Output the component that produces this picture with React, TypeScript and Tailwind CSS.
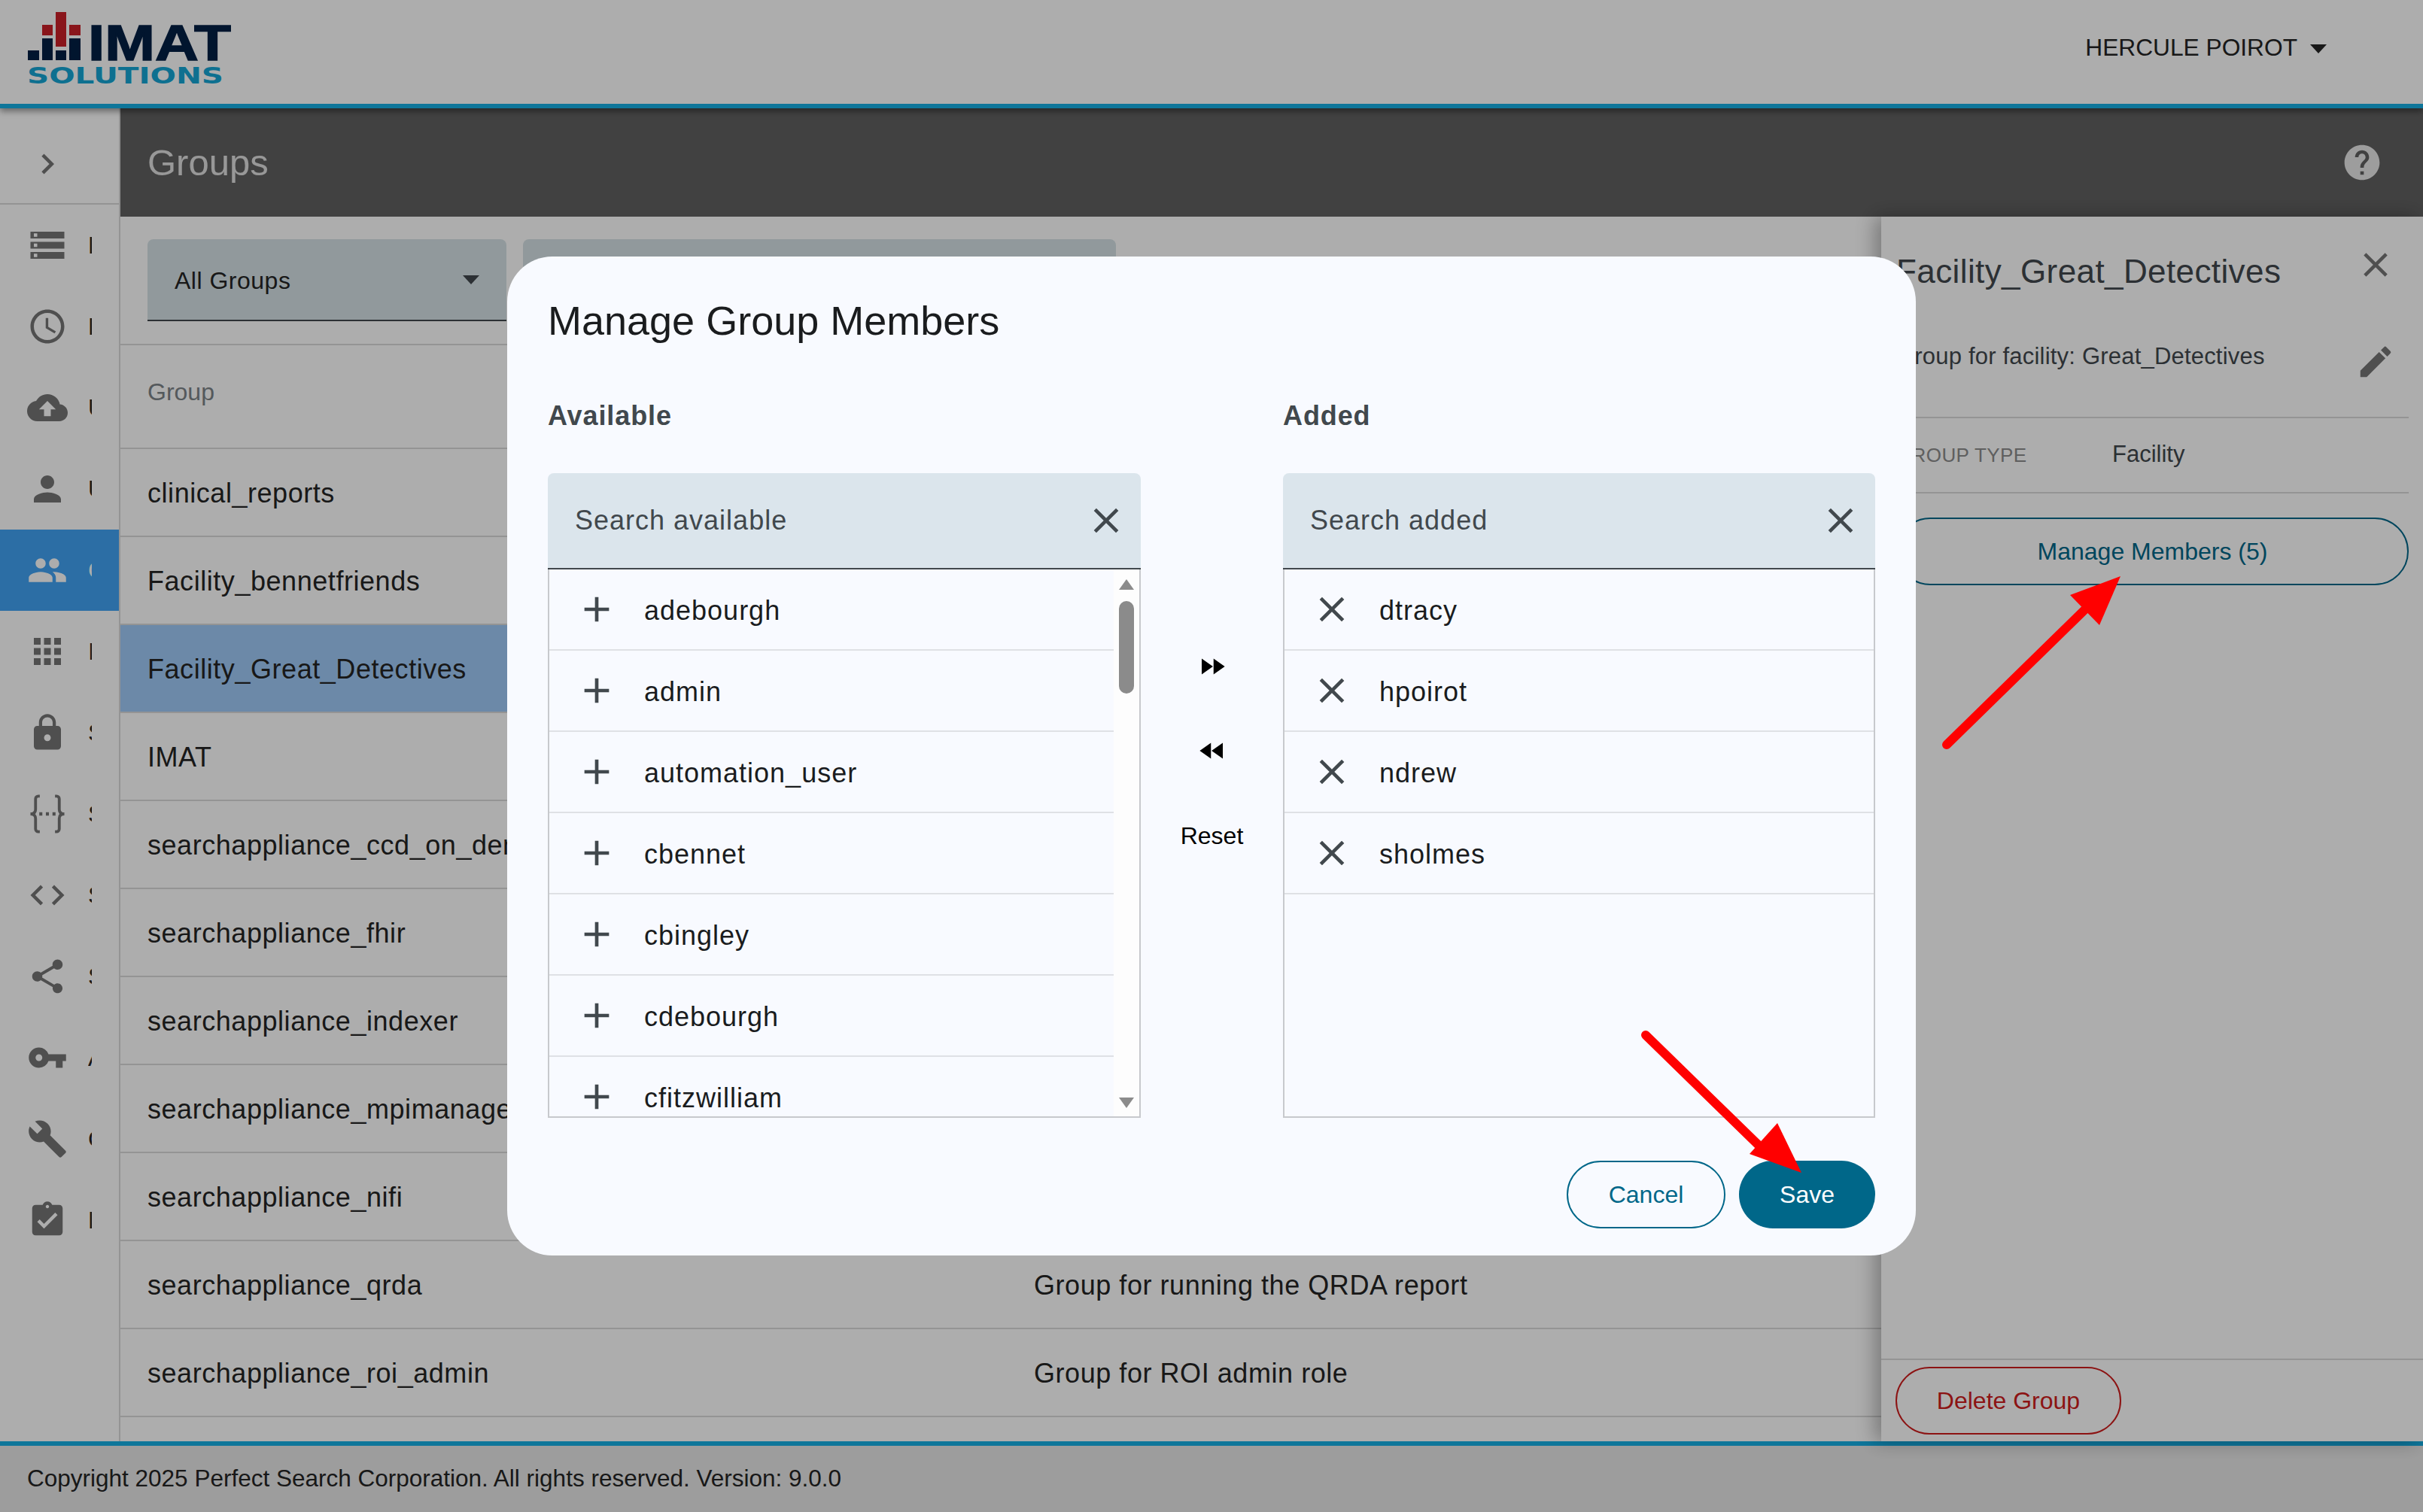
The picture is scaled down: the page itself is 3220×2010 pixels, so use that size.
import {
  MdAccessTime,
  MdAdd,
  MdApps,
  MdAssignmentTurnedIn,
  MdBuild,
  MdChevronRight,
  MdClose,
  MdCloudUpload,
  MdCode,
  MdEdit,
  MdFastForward,
  MdFastRewind,
  MdHelp,
  MdLock,
  MdPeople,
  MdPerson,
  MdShare,
  MdStorage,
  MdVpnKey,
} from "react-icons/md";

function BracesIcon() {
  return (
    <svg viewBox="0 0 24 24" width={54} height={54} fill="none" stroke="currentColor" strokeWidth={1.7}>
      <path d="M7.5 1.5H6.6a1.6 1.6 0 0 0-1.6 1.6v6.2c0 1.5-.8 2.7-3 2.7 2.2 0 3 1.2 3 2.7v6.2a1.6 1.6 0 0 0 1.6 1.6h.9" />
      <path d="M16.5 1.5h.9a1.6 1.6 0 0 1 1.6 1.6v6.2c0 1.5.8 2.7 3 2.7-2.2 0-3 1.2-3 2.7v6.2a1.6 1.6 0 0 1-1.6 1.6h-.9" />
      <path d="M7.2 12h1.8M11.1 12h1.8M15 12h1.8" strokeWidth={2} />
    </svg>
  );
}

const navItems = [
  { icon: <MdStorage size={54} />, label: "Dashboard" },
  { icon: <MdAccessTime size={54} />, label: "History" },
  { icon: <MdCloudUpload size={54} />, label: "Upload" },
  { icon: <MdPerson size={54} />, label: "Users" },
  { icon: <MdPeople size={54} />, label: "Groups", active: true },
  { icon: <MdApps size={54} />, label: "Indexes" },
  { icon: <MdLock size={54} />, label: "Security" },
  { icon: <BracesIcon />, label: "Schemas" },
  { icon: <MdCode size={54} />, label: "Scripts" },
  { icon: <MdShare size={54} />, label: "Sharing" },
  { icon: <MdVpnKey size={54} />, label: "API Keys" },
  { icon: <MdBuild size={54} />, label: "Configuration" },
  { icon: <MdAssignmentTurnedIn size={54} />, label: "Reports" },
];

const groups = [
  { name: "clinical_reports" },
  { name: "Facility_bennetfriends" },
  { name: "Facility_Great_Detectives", selected: true },
  { name: "IMAT" },
  { name: "searchappliance_ccd_on_demand" },
  { name: "searchappliance_fhir" },
  { name: "searchappliance_indexer" },
  { name: "searchappliance_mpimanager" },
  { name: "searchappliance_nifi" },
  { name: "searchappliance_qrda", description: "Group for running the QRDA report" },
  { name: "searchappliance_roi_admin", description: "Group for ROI admin role" },
];

const available = ["adebourgh", "admin", "automation_user", "cbennet", "cbingley", "cdebourgh", "cfitzwilliam"];
const added = ["dtracy", "hpoirot", "ndrew", "sholmes"];

function Logo() {
  return (
    <svg width={320} height={120} viewBox="0 0 320 120" className="block">
      <rect x={74} y={16} width={14} height={46} fill="#cb2029" />
      <rect x={56} y={33} width={14} height={14} fill="#cb2029" />
      <rect x={92} y={33} width={15} height={14} fill="#cb2029" />
      <rect x={37} y={67} width={15} height={13} fill="#021f44" />
      <rect x={56} y={51} width={14} height={29} fill="#021f44" />
      <rect x={74} y={67} width={14} height={13} fill="#021f44" />
      <rect x={92} y={51} width={15} height={29} fill="#021f44" />
      <text
        x={117}
        y={80}
        fontFamily="'Liberation Sans', sans-serif"
        fontWeight={700}
        fontSize={67}
        textLength={190}
        lengthAdjust="spacingAndGlyphs"
        fill="#021f44"
        stroke="#021f44"
        strokeWidth={1.5}
      >
        IMAT
      </text>
      <text
        x={36}
        y={111}
        fontFamily="'DejaVu Sans', sans-serif"
        fontWeight={700}
        fontSize={30}
        textLength={261}
        lengthAdjust="spacingAndGlyphs"
        fill="#15a5d4"
      >
        SOLUTIONS
      </text>
    </svg>
  );
}

function SearchField({ placeholder }: { placeholder: string }) {
  return (
    <div className="flex h-[128px] items-center justify-between rounded-t-lg border-b-2 border-[#41484d] bg-[#dbe5ec] pl-[36px] pr-[18px]">
      <span className="text-[36px] tracking-[1px] text-[#41484d]">{placeholder}</span>
      <MdClose size={56} className="text-[#41484d]" />
    </div>
  );
}

function MemberRow({ name, removable }: { name: string; removable?: boolean }) {
  return (
    <div className="flex h-[108px] shrink-0 items-center border-b-2 border-[#dfe1e5] pl-[35px]">
      {removable ? (
        <MdClose size={56} className="shrink-0 text-[#41484d]" />
      ) : (
        <MdAdd size={56} className="shrink-0 text-[#41484d]" />
      )}
      <span className="ml-[35px] pt-[3px] text-[36px] tracking-[1px] text-[#1a1c1e]">{name}</span>
    </div>
  );
}

function Scrollbar() {
  return (
    <div className="flex w-[34px] shrink-0 flex-col items-center bg-[#fdfdfd] pt-[12px] pb-[10px]">
      <svg width={22} height={16} viewBox="0 0 22 16" className="text-[#8b8b8b]">
        <path d="M11 1 L21 15 H1 Z" fill="currentColor" />
      </svg>
      <div className="mt-[14px] h-[123px] w-[20px] rounded-full bg-[#8b8b8b]" />
      <div className="flex-1" />
      <svg width={22} height={16} viewBox="0 0 22 16" className="text-[#8b8b8b]">
        <path d="M11 15 L21 1 H1 Z" fill="currentColor" />
      </svg>
    </div>
  );
}

function ManageMembersDialog() {
  return (
    <div className="w-[1872px] rounded-[60px] bg-[#f8faff] px-[54px] pt-[55px] pb-[36px]">
      <h2 className="flex h-[60px] items-center text-[54px] text-[#1a1c1e]">Manage Group Members</h2>
      <div className="mt-[73px] flex">
        <div className="w-[788px]">
          <div className="h-[44px] pt-[2px] text-[36px] leading-[44px] font-bold tracking-[0.9px] text-[#41484d]">
            Available
          </div>
          <div className="mt-[56px]">
            <SearchField placeholder="Search available" />
            <div className="flex h-[729px] overflow-hidden border-x-2 border-b-2 border-[#c7c9cd]">
              <div className="flex min-w-0 flex-1 flex-col">
                {available.map((name) => (
                  <MemberRow key={name} name={name} />
                ))}
              </div>
              <Scrollbar />
            </div>
          </div>
        </div>
        <div className="flex w-[189px] flex-col items-center pt-[336px] text-black">
          <MdFastForward size={42} />
          <MdFastRewind size={42} className="mt-[70px]" />
          <span className="mt-[74px] text-[32px] leading-[36px]">Reset</span>
        </div>
        <div className="w-[787px]">
          <div className="h-[44px] pt-[2px] text-[36px] leading-[44px] font-bold tracking-[0.9px] text-[#41484d]">
            Added
          </div>
          <div className="mt-[56px]">
            <SearchField placeholder="Search added" />
            <div className="flex h-[729px] flex-col overflow-hidden border-x-2 border-b-2 border-[#c7c9cd]">
              {added.map((name) => (
                <MemberRow key={name} name={name} removable />
              ))}
            </div>
          </div>
        </div>
      </div>
      <div className="mt-[57px] flex justify-end gap-[18px]">
        <button className="h-[90px] w-[211px] rounded-full border-2 border-[#006789] text-[32px] text-[#006789]">
          Cancel
        </button>
        <button className="h-[90px] w-[181px] rounded-full bg-[#006789] text-[32px] text-white">Save</button>
      </div>
    </div>
  );
}

export default function App() {
  return (
    <div className="relative flex h-[2010px] w-[3220px] flex-col overflow-hidden bg-white font-['Liberation_Sans',sans-serif] text-[#242424]">
      <header className="relative z-10 flex h-[144px] shrink-0 items-start justify-between border-b-[6px] border-[#15aee4] bg-white shadow-[0_4px_8px_rgba(0,0,0,0.4)]">
        <Logo />
        <div className="mt-[45px] mr-[128px] flex items-center">
          <span className="text-[31.7px] leading-[36px]">HERCULE POIROT</span>
          <svg width={22} height={12} viewBox="0 0 22 12" className="ml-[17px] mt-[3px]">
            <path d="M0 0 H22 L11 12 Z" fill="#242424" />
          </svg>
        </div>
      </header>

      <div className="flex min-h-0 flex-1">
        <nav className="flex w-[160px] shrink-0 flex-col border-r-2 border-[#dadada] bg-white">
          <div className="flex h-[128px] shrink-0 items-center border-b-2 border-[#dadada] pl-[36px] pt-[22px] text-[#757575]">
            <MdChevronRight size={54} />
          </div>
          {navItems.map((item) => (
            <div
              key={item.label}
              className={
                item.active
                  ? "flex h-[108px] shrink-0 items-center pl-[36px] bg-[#41a3f4] text-white"
                  : "flex h-[108px] shrink-0 items-center pl-[36px] text-[#757575]"
              }
            >
              <span className="flex w-[54px] shrink-0 items-center justify-center">{item.icon}</span>
              <span
                className={
                  item.active
                    ? "ml-[27px] w-[5px] overflow-hidden whitespace-nowrap text-[32px] text-white"
                    : "ml-[27px] w-[5px] overflow-hidden whitespace-nowrap text-[32px] text-[#212121]"
                }
              >
                {item.label}
              </span>
            </div>
          ))}
        </nav>

        <main className="flex min-w-0 flex-1 flex-col">
          <div className="flex h-[144px] shrink-0 items-center justify-between bg-[#616161] pl-[36px] pr-[53px]">
            <h1 className="pt-[2px] text-[49px] text-[#e1e1e1]">Groups</h1>
            <MdHelp size={56} className="text-[#e8e8e8]" />
          </div>

          <div className="flex min-h-0 flex-1">
            <section className="min-w-0 flex-1 overflow-hidden">
              <div className="flex h-[171px] gap-[22px] border-b-2 border-[#dadada] pl-[36px] pt-[30px]">
                <div className="flex h-[109px] w-[477px] items-center justify-between rounded-t-lg border-b-2 border-[#41484d] bg-[#d6e2e6] pl-[36px] pr-[36px]">
                  <span className="pt-[2px] text-[32px] tracking-[0.5px]">All Groups</span>
                  <svg width={22} height={12} viewBox="0 0 22 12">
                    <path d="M0 0 H22 L11 12 Z" fill="#41484d" />
                  </svg>
                </div>
                <div className="h-[109px] w-[788px] rounded-t-lg bg-[#d6e2e6]" />
              </div>
              <div className="flex h-[138px] border-b-2 border-[#dadada] pl-[36px] pt-[38px] text-[32px] text-[#7d8388]">
                Group
              </div>
              {groups.map((group) => (
                <div
                  key={group.name}
                  className={
                    group.selected
                      ? "flex h-[117px] items-center border-b-2 border-[#dadada] bg-[#a0cbf8] pl-[36px] pt-[3px] text-[36px] tracking-[0.55px]"
                      : "flex h-[117px] items-center border-b-2 border-[#dadada] pl-[36px] pt-[3px] text-[36px] tracking-[0.55px]"
                  }
                >
                  <span className="w-[1178px] shrink-0 whitespace-nowrap">{group.name}</span>
                  <span className="whitespace-nowrap">{group.description}</span>
                </div>
              ))}
            </section>

            <aside className="relative flex w-[720px] shrink-0 flex-col bg-white shadow-[-8px_0_24px_rgba(0,0,0,0.3)]">
              <div className="flex h-[146px] items-center justify-between pl-[20px] pr-[36px]">
                <span className="text-[44px] tracking-[0.4px] text-[#41484d]">Facility_Great_Detectives</span>
                <MdClose size={54} className="mb-[18px] text-[#757575]" />
              </div>
              <div className="mr-[19px] ml-[20px] flex h-[122px] items-start justify-between border-b-2 border-[#dadada] pt-[22px] pr-[17px]">
                <span className="text-[31px] leading-[36px] tracking-[0.2px] text-[#41484d]">
                  Group for facility: Great_Detectives
                </span>
                <MdEdit size={54} className="-mt-[2px] text-[#757575]" />
              </div>
              <div className="mr-[19px] ml-[20px] flex h-[100px] items-center border-b-2 border-[#dadada]">
                <span className="w-[287px] text-[26px] tracking-[0.4px] text-[#8c8c8c]">GROUP TYPE</span>
                <span className="mb-[2px] text-[31px] text-[#41484d]">Facility</span>
              </div>
              <button className="mt-[32px] mr-[19px] ml-[20px] h-[90px] rounded-full border-2 border-[#00678a] text-[32px] text-[#00678a]">
                Manage Members (5)
              </button>
              <div className="flex-1" />
              <div className="h-[110px] border-t-2 border-[#dadada] pt-[9px] pl-[19px]">
                <button className="h-[90px] w-[300px] rounded-full border-2 border-[#ce1d1d] text-[32px] text-[#ce1d1d]">
                  Delete Group
                </button>
              </div>
            </aside>
          </div>
        </main>
      </div>

      <footer className="flex h-[94px] shrink-0 items-center border-t-[6px] border-[#15aee4] bg-[#e8e8e8] pl-[36px] text-[31.5px]">
        Copyright 2025 Perfect Search Corporation. All rights reserved. Version: 9.0.0
      </footer>

      {/* modal scrim */}
      <div className="absolute inset-0 z-20 flex items-center justify-center bg-[rgba(0,0,0,0.32)]">
        <ManageMembersDialog />
      </div>

      {/* red callout arrows on top of the screenshot */}
      <svg className="pointer-events-none absolute inset-0 z-30" width={3220} height={2010} viewBox="0 0 3220 2010">
        <path d="M2187 1376 L2350 1535" stroke="#ff0000" strokeWidth={12} strokeLinecap="round" />
        <path d="M2394 1559 L2362 1493 L2325 1534 Z" fill="#ff0000" />
        <path d="M2587 990 L2770 811" stroke="#ff0000" strokeWidth={12} strokeLinecap="round" />
        <path d="M2818 766 L2751 791 L2790 831 Z" fill="#ff0000" />
      </svg>
    </div>
  );
}
